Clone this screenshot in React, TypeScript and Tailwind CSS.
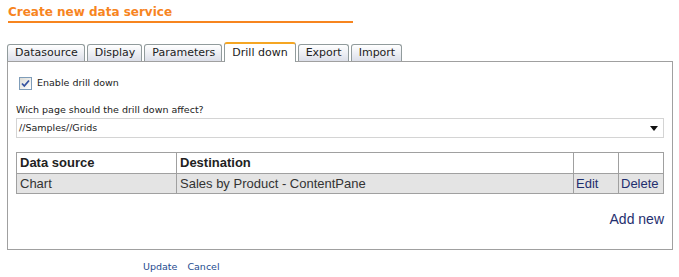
import { useState } from "react";

const tabs = ["Datasource", "Display", "Parameters", "Drill down", "Export", "Import"];

function Tab({ label, active }: { label: string; active: boolean }) {
  if (active) {
    return (
      <div className="relative -mb-px h-[20px] rounded-t-[3px] border border-b-0 border-[#919b9c] border-t-2 border-t-[#f5a623] bg-white pl-[7px] pr-[7px] pt-[1px] text-[11px] leading-[16px] text-[#222]">
        {label}
      </div>
    );
  }
  return (
    <div className="h-[17px] rounded-t-[3px] border border-b-0 border-[#919b9c] bg-gradient-to-b from-white to-[#dcdfe9] pl-[7px] pr-[6px] text-[11px] leading-[16px] text-[#222]">
      {label}
    </div>
  );
}

export default function App() {
  const [enabled, setEnabled] = useState(true);

  return (
    <div className="h-[277px] w-[679px] bg-white font-['DejaVu_Sans',Verdana,sans-serif]">
      {/* Header */}
      <div className="pl-[8px] pt-[5px]">
        <div className="w-[345px] border-b-2 border-[#f7851f] pb-[1px] text-[12px] font-bold leading-[15px] text-[#f7851f]">
          Create new data service
        </div>
      </div>

      {/* Tabs */}
      <div className="mt-[19px] flex items-end gap-[2px] pl-[7px]">
        {tabs.map((t) => (
          <Tab key={t} label={t} active={t === "Drill down"} />
        ))}
      </div>

      {/* Panel */}
      <div className="ml-[7px] h-[189px] w-[666px] border border-[#a0a0a0] px-[8px] pt-[14px]">
        <label
          className="flex cursor-pointer items-center gap-[5px] pl-[3px] text-[9.5px] text-[#222]"
          onClick={() => setEnabled(!enabled)}
        >
          <span className="flex h-[13px] w-[13px] items-center justify-center border border-[#7f9db9] bg-gradient-to-br from-[#dcdcd7] to-white">
            {enabled && (
              <svg width="9" height="9" viewBox="0 0 9 9">
                <path d="M1 4.5l2.3 2.5L8 1.5" fill="none" stroke="#3452a0" strokeWidth="1.8" />
              </svg>
            )}
          </span>
          Enable drill down
        </label>

        <div className="mt-[14px] text-[9.5px] leading-[12px] text-[#222]">
          Wich page should the drill down affect?
        </div>
        <div className="mt-[2px] flex h-[20px] w-[648px] items-center justify-between border border-[#d4d4d4] pl-[2px] pr-[5px] text-[9.5px] text-[#222]">
          <span>//Samples//Grids</span>
          <svg width="8" height="5" viewBox="0 0 8 5">
            <path d="M0 0h8L4 5z" fill="#111" />
          </svg>
        </div>

        <table className="mt-[14px] w-[648px] border-collapse font-['Liberation_Sans',Arial,sans-serif] text-[13px]">
          <thead>
            <tr className="h-[20px] bg-white text-left text-[#222]">
              <th className="w-[160px] border border-[#a0a0a0] px-[3px] py-0 font-bold">Data source</th>
              <th className="border border-[#a0a0a0] px-[3px] py-0 font-bold">Destination</th>
              <th className="w-[45px] border border-[#a0a0a0]"></th>
              <th className="w-[45px] border border-[#a0a0a0]"></th>
            </tr>
          </thead>
          <tbody>
            <tr className="h-[20px] bg-[#e4e4e4] text-[#333]">
              <td className="border border-[#a0a0a0] px-[3px] py-0">Chart</td>
              <td className="border border-[#a0a0a0] px-[3px] py-0">Sales by Product - ContentPane</td>
              <td className="border border-[#a0a0a0] px-[2px] py-0 text-[#1f2f6f]">Edit</td>
              <td className="border border-[#a0a0a0] px-[2px] py-0 text-[#1f2f6f]">Delete</td>
            </tr>
          </tbody>
        </table>

        <div className="mt-[15px] w-[648px] text-right font-['Liberation_Sans',Arial,sans-serif] text-[14px] text-[#1f2f6f]">
          Add new
        </div>
      </div>

      {/* Footer */}
      <div className="mt-[10px] flex gap-[10px] pl-[143px] text-[9.5px] text-[#1e4b8f]">
        <span>Update</span>
        <span>Cancel</span>
      </div>
    </div>
  );
}
